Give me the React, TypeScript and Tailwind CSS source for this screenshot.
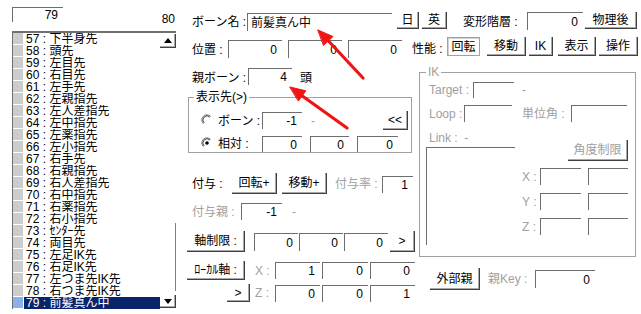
const inp = 'flex items-center bg-white border-t border-l border-[#6e6e6e] leading-none whitespace-nowrap shrink-0'
const btn = 'flex items-center justify-center bg-white border-r border-b border-[#404040] shadow-[inset_-1px_-1px_0_#a8a8a8] leading-none whitespace-nowrap shrink-0'
const dim = 'text-[#a0a0a0]'
const lbl = 'leading-none whitespace-nowrap shrink-0'

function Box({ c, v, left }: { c: string; v?: string; left?: boolean }) {
  return <div className={`${inp} ${left ? 'justify-start pl-[3px]' : 'justify-end pr-[5px]'} ${c}`}>{v}</div>
}

function Btn({ c, t }: { c: string; t: string }) {
  return <div className={`${btn} ${c}`}>{t}</div>
}

function Radio({ on, c }: { on?: boolean; c: string }) {
  return (
    <svg width="12" height="12" viewBox="0 0 12 12" className={`shrink-0 ${c}`}>
      <path d="M2.3 9.7 A5.2 5.2 0 0 1 9.7 2.3" fill="none" stroke="#808080" />
      <path d="M3.1 8.9 A4.1 4.1 0 0 1 8.9 3.1" fill="none" stroke="#404040" />
      {on && <circle cx="6" cy="6" r="1.8" fill="#000" />}
    </svg>
  )
}

const bones: [number, string][] = [
  [57, '下半身先'],
  [58, '頭先'],
  [59, '左目先'],
  [60, '右目先'],
  [61, '左手先'],
  [62, '左親指先'],
  [63, '左人差指先'],
  [64, '左中指先'],
  [65, '左薬指先'],
  [66, '左小指先'],
  [67, '右手先'],
  [68, '右親指先'],
  [69, '右人差指先'],
  [70, '右中指先'],
  [71, '右薬指先'],
  [72, '右小指先'],
  [73, 'ｾﾝﾀｰ先'],
  [74, '両目先'],
  [75, '左足IK先'],
  [76, '右足IK先'],
  [77, '左つま先IK先'],
  [78, '右つま先IK先'],
  [79, '前髪真ん中'],
]

function BoneList() {
  return (
    <div className="mt-[6px] w-[164px] h-[278px] border-t-2 border-l border-[#707070] flex overflow-hidden">
      <div className="w-[147px] flex flex-col">
        {bones.map(([n, name]) => {
          const sel = n === 79
          return (
            <div key={n} className="h-[12px] flex items-start shrink-0 overflow-hidden">
              <div className={`w-[10px] h-[11px] shrink-0 ${sel ? 'bg-[#8cb0ea]' : 'bg-[#cdcdcd]'}`} />
              <div
                className={`ml-[1px] h-[12px] flex-1 pl-[2px] flex items-center whitespace-nowrap leading-[12px] overflow-hidden ${
                  sel ? 'bg-[#0a246a] text-white' : ''
                }`}
              >
                {n} : {name}
              </div>
            </div>
          )
        })}
      </div>
      <div className="w-[16px] flex flex-col">
        <div className={`${btn} mt-[1px] h-[14px] w-[16px]`}>
          <svg width="8" height="5" viewBox="0 0 8 5">
            <path d="M4 0 L8 5 L0 5 Z" fill="#000" />
          </svg>
        </div>
        <div className="flex-1 flex flex-col justify-end">
          <div className="h-[68px] mb-[4px] border-r border-[#808080]" />
        </div>
        <div className={`${btn} mb-[1px] h-[13px] w-[16px]`}>
          <svg width="8" height="5" viewBox="0 0 8 5">
            <path d="M0 0 L8 0 L4 5 Z" fill="#000" />
          </svg>
        </div>
      </div>
    </div>
  )
}

function Arrows() {
  return (
    <svg className="absolute inset-0 pointer-events-none" width="641" height="314" viewBox="0 0 641 314">
      <g stroke="#f01414" strokeWidth="3.2" strokeLinecap="round" fill="#f01414">
        <line x1="363" y1="78" x2="328.5" y2="41" />
        <polygon points="318,30 333,36.6 323.7,45.3" strokeWidth="1" strokeLinejoin="round" />
        <line x1="347" y1="128" x2="302" y2="95.7" />
        <polygon points="290,87 305.8,90.8 298.6,100.8" strokeWidth="1" strokeLinejoin="round" />
      </g>
    </svg>
  )
}

export default function App() {
  return (
    <div className="relative w-[641px] h-[314px] bg-white overflow-hidden flex text-[12px] text-black font-['Liberation_Sans','Noto_Sans_CJK_JP',sans-serif]">
      {/* bone list */}
      <div className="w-[187px] shrink-0 pl-[12px] flex flex-col">
        <div className="mt-[7px] w-[163px] flex items-start">
          <Box c="w-[51px] h-[15px]" v="79" />
          <span className={`${lbl} ml-auto mt-[6px]`}>80</span>
        </div>
        <BoneList />
      </div>

      {/* bone properties */}
      <div className="flex-1 flex flex-col">
        <div className="mt-[12px] h-[19px] flex items-start">
          <span className={`${lbl} ml-[5px] w-[55px] mt-[4px]`}>ボーン名 :</span>
          <Box c="mt-[1px] w-[145px] h-[18px]" v="前髪真ん中" left />
          <Btn c="ml-[5px] w-[22px] h-[17px]" t="日" />
          <Btn c="ml-[3px] w-[25px] h-[17px]" t="英" />
          <span className={`${lbl} ml-[16px] w-[64px] mt-[4px]`}>変形階層 :</span>
          <Box c="w-[56px] h-[18px]" v="0" />
          <Btn c="ml-[2px] w-[52px] h-[17px]" t="物理後" />
        </div>

        <div className="mt-[6px] flex items-start">
          <span className={`${lbl} ml-[5px] w-[36px] mt-[7px]`}>位置 :</span>
          <Box c="mt-[3px] w-[54px] h-[18px]" v="0" />
          <Box c="mt-[3px] ml-[6px] w-[54px] h-[18px]" v="0" />
          <Box c="mt-[3px] ml-[6px] w-[54px] h-[18px]" v="0" />
          <span className={`${lbl} ml-[10px] w-[35px] mt-[6px]`}>性能 :</span>
          <div className="flex items-center justify-center w-[33px] h-[19px] border border-[#a0a0a0] shadow-[inset_1px_1px_0_#d0d0d0] leading-none shrink-0">
            回転
          </div>
          <Btn c="ml-[7px] w-[39px] h-[19px]" t="移動" />
          <Btn c="ml-[3px] w-[24px] h-[19px]" t="IK" />
          <Btn c="ml-[5px] w-[38px] h-[19px]" t="表示" />
          <Btn c="ml-[3px] w-[39px] h-[19px]" t="操作" />
        </div>

        <div className="flex">
          {/* left column */}
          <div className="w-[232px] shrink-0 flex flex-col">
            <div className="mt-[10px] flex items-start">
              <span className={`${lbl} ml-[5px] w-[56px] mt-[4px]`}>親ボーン :</span>
              <Box c="w-[44px] h-[17px]" v="4" />
              <span className={`${lbl} ml-[8px] mt-[4px]`}>頭</span>
            </div>

            <fieldset className="mt-[6px] ml-[1px] w-[224px] border border-[#a0a0a0]">
              <legend className="ml-[5px] px-[2px] leading-none">表示先(&gt;)</legend>
              <div className="mt-[9px] h-[18px] flex items-start">
                <Radio c="ml-[12px] mt-[2px]" />
                <span className={`${lbl} ml-[5px] w-[44px] mt-[3px]`}>ボーン :</span>
                <Box c="w-[40px] h-[17px]" v="-1" />
                <span className={`${lbl} ${dim} ml-[9px] mt-[3px]`}>-</span>
                <Btn c="ml-auto mr-[3px] -mt-[1px] w-[25px] h-[19px]" t="<<" />
              </div>
              <div className="mt-[6px] h-[16px] flex items-start">
                <Radio on c="ml-[12px] mt-[1px]" />
                <span className={`${lbl} ml-[5px] w-[44px] mt-[2px]`}>相対 :</span>
                <Box c="w-[40px] h-[16px]" v="0" />
                <Box c="ml-[8px] w-[39px] h-[16px]" v="0" />
                <Box c="ml-[8px] w-[41px] h-[16px]" v="0" />
              </div>
            </fieldset>

            <div className="mt-[20px] flex items-start">
              <span className={`${lbl} ml-[5px] w-[40px] mt-[5px]`}>付与 :</span>
              <Btn c="w-[45px] h-[21px]" t="回転+" />
              <Btn c="ml-[5px] w-[45px] h-[21px]" t="移動+" />
              <span className={`${lbl} ${dim} ml-[8px] w-[47px] mt-[5px]`}>付与率 :</span>
              <Box c="mt-[3px] w-[31px] h-[17px]" v="1" />
            </div>

            <div className="mt-[9px] flex items-start">
              <span className={`${lbl} ${dim} ml-[5px] w-[49px] mt-[3px]`}>付与親 :</span>
              <Box c="w-[41px] h-[17px]" v="-1" />
              <span className={`${lbl} ${dim} ml-[10px] mt-[3px]`}>-</span>
            </div>

            <div className="mt-[11px] flex items-start">
              <Btn c="w-[58px] h-[21px]" t="軸制限 :" />
              <Box c="ml-[9px] mt-[2px] w-[44px] h-[18px]" v="0" />
              <Box c="ml-[1px] mt-[2px] w-[44px] h-[18px]" v="0" />
              <Box c="ml-[1px] mt-[2px] w-[44px] h-[18px]" v="0" />
              <Btn c="ml-[2px] w-[25px] h-[21px]" t=">" />
            </div>

            <div className="mt-[9px] flex items-start">
              <Btn c="w-[58px] h-[19px]" t="ﾛｰｶﾙ軸 :" />
              <span className={`${lbl} ${dim} ml-[10px] w-[20px] mt-[4px]`}>X :</span>
              <Box c="mt-[1px] w-[45px] h-[17px]" v="1" />
              <Box c="ml-[2px] mt-[1px] w-[46px] h-[17px]" v="0" />
              <Box c="ml-[2px] mt-[1px] w-[45px] h-[17px]" v="0" />
            </div>

            <div className="mt-[4px] flex items-start">
              <Btn c="ml-[40px] w-[23px] h-[18px]" t=">" />
              <span className={`${lbl} ${dim} ml-[5px] w-[20px] mt-[3px]`}>Z :</span>
              <Box c="mt-[1px] w-[45px] h-[17px]" v="0" />
              <Box c="ml-[2px] mt-[1px] w-[46px] h-[17px]" v="0" />
              <Box c="ml-[2px] mt-[1px] w-[45px] h-[17px]" v="1" />
            </div>
          </div>

          {/* right column: IK */}
          <div className="w-[217px] shrink-0 flex flex-col">
            <fieldset className="mt-[8px] w-[217px] h-[191px] border border-[#a0a0a0]">
              <legend className={`ml-[6px] px-[2px] leading-none ${dim}`}>IK</legend>
              <div className="mt-[4px] flex items-start">
                <span className={`${lbl} ${dim} ml-[9px] w-[44px] mt-[2px]`}>Target :</span>
                <Box c="w-[41px] h-[16px]" />
                <span className={`${lbl} ${dim} ml-[8px] mt-[2px]`}>-</span>
              </div>
              <div className="mt-[7px] flex items-start">
                <span className={`${lbl} ${dim} ml-[9px] w-[35px] mt-[3px]`}>Loop :</span>
                <Box c="w-[48px] h-[17px]" />
                <span className={`${lbl} ${dim} ml-[10px] w-[49px] mt-[3px]`}>単位角 :</span>
                <Box c="w-[56px] h-[17px]" />
              </div>
              <div className="flex items-start">
                <div className="ml-[6px] w-[89px] shrink-0 flex flex-col">
                  <span className={`${lbl} ${dim} ml-[3px] mt-[10px] h-[12px]`}>Link :&nbsp;&nbsp;-</span>
                  <div className="mt-[3px] w-[89px] h-[98px] border-t border-l border-[#6e6e6e]" />
                </div>
                <div className="ml-[7px] w-[106px] shrink-0 flex flex-col">
                  <Btn c={`ml-[46px] mt-[18px] w-[60px] h-[21px] ${dim}`} t="角度制限" />
                  {['X', 'Y', 'Z'].map((a, i) => (
                    <div key={a} className={`${i === 0 ? 'mt-[7px]' : 'mt-[8px]'} flex items-start`}>
                      <span className={`${lbl} ${dim} w-[18px] mt-[3px]`}>{a} :</span>
                      <Box c="w-[41px] h-[17px]" />
                      <Box c="ml-[7px] w-[40px] h-[17px]" />
                    </div>
                  ))}
                </div>
              </div>
            </fieldset>

            <div className="mt-[11px] flex items-start">
              <Btn c="ml-[11px] w-[50px] h-[22px]" t="外部親" />
              <span className={`${lbl} ${dim} ml-[8px] w-[47px] mt-[5px]`}>親Key :</span>
              <Box c="mt-[2px] w-[60px] h-[18px]" v="0" />
            </div>
          </div>
        </div>
      </div>

      <Arrows />
    </div>
  )
}
